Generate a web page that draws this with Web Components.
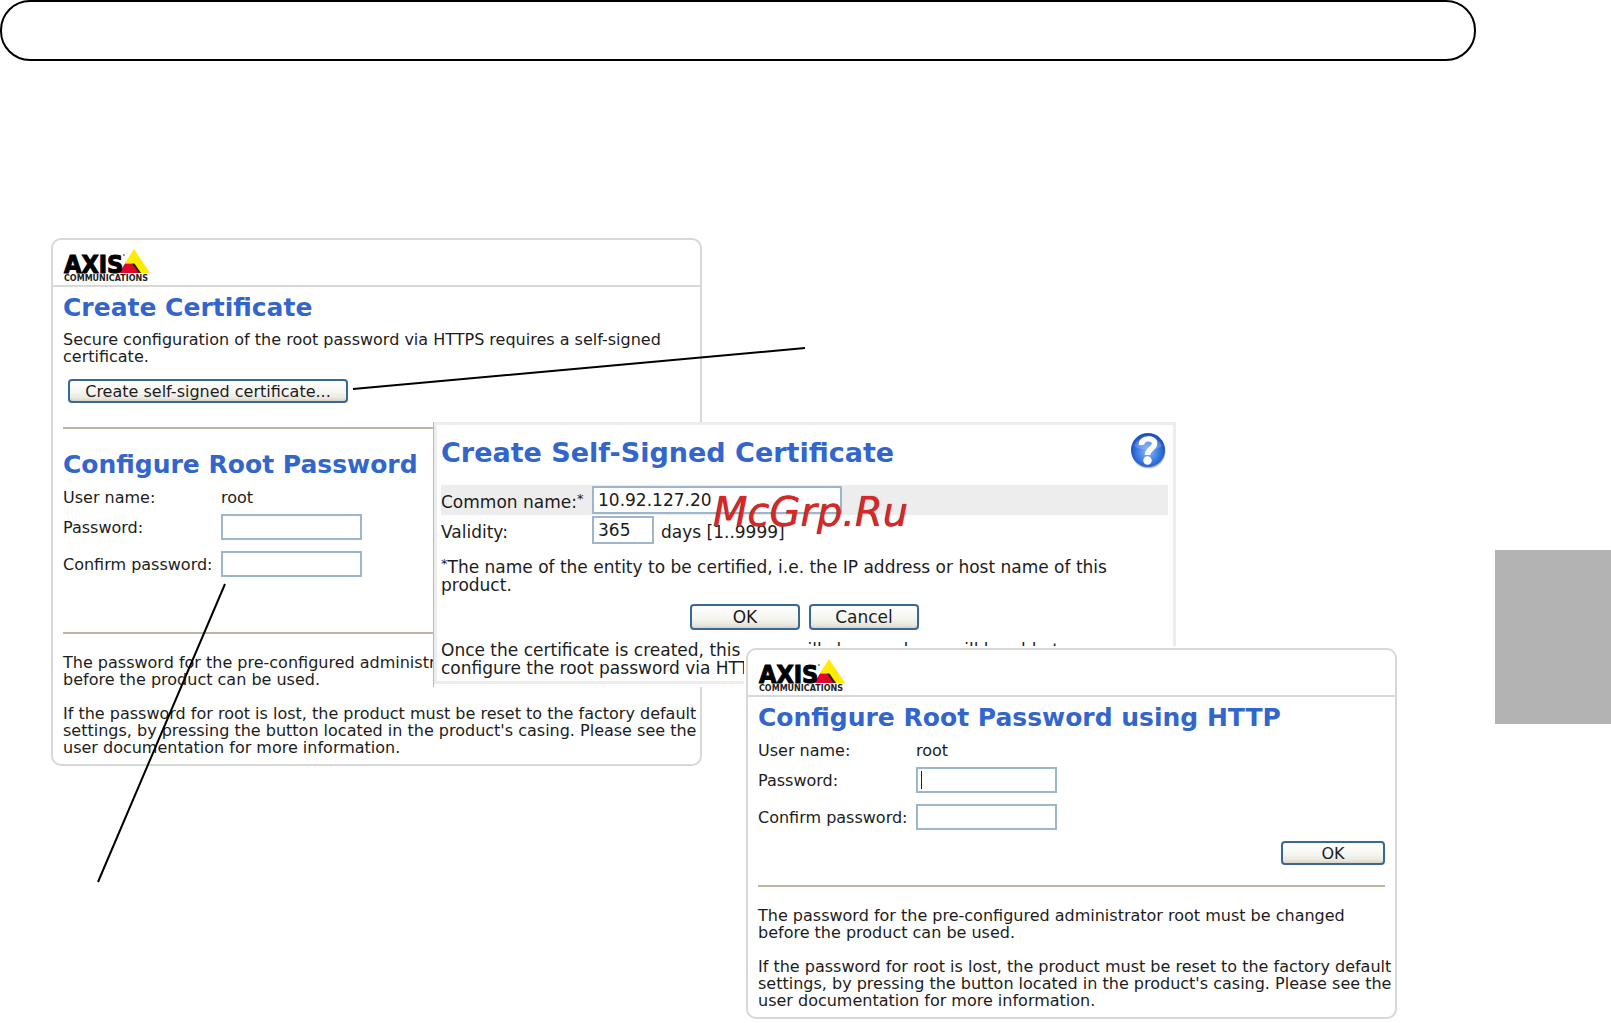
<!DOCTYPE html>
<html lang="en">
<head>
<meta charset="utf-8">
<title>Setting the root password</title>
<style>
  html, body { margin: 0; background: #fff; }
  body { font-family: "DejaVu Sans", Verdana, sans-serif; color: #1c1c1c; }
</style>
</head>
<body>
<manual-page></manual-page>

<script>
const define = (name, html, setup) => {
  const template = document.createElement('template');
  template.innerHTML = html;
  customElements.define(name, class extends HTMLElement {
    constructor() {
      super();
      this.attachShadow({ mode: 'open' }).append(template.content.cloneNode(true));
    }
    connectedCallback() { if (setup) setup(this, this.shadowRoot); }
  });
};

/* Brand mark in the panel header */
define('axis-logo', `
  <style>
    :host { display: block; width: 88px; height: 34px; }
    svg { display: block; overflow: visible; }
    text { font-family: "DejaVu Sans Condensed", "DejaVu Sans", sans-serif; font-weight: 700; fill: #000; }
    .name { font-size: 25px; stroke: #000; stroke-width: 1px; }
    .sub { font-family: "DejaVu Sans", sans-serif; font-size: 8px; fill: #222; }
  </style>
  <svg width="88" height="34" viewBox="0 0 88 34">
    <path d="M70 1 L86 25 H76 L69 15 H61 Z" fill="#ffec00"/>
    <path d="M61 15.500 H69 L75 25 H55 Z" fill="#e2062c"/>
    <path d="M68 15.500 H70.500 L77 25 H74.500 Z" fill="#222"/>
    <text class="name" x="0" y="25">AXIS</text>
    <circle cx="60" cy="7" r="1" fill="#777"/>
    <text class="sub" x="0" y="33">COMMUNICATIONS</text>
  </svg>
`);

define('help-icon', `
  <style>
    :host { display: block; }
    button { display: block; border: 0; padding: 0; background: none; }
    svg { display: block; }
  </style>
  <button type="button" aria-label="Help">
    <svg width="36" height="37" viewBox="0 0 36 37">
      <defs>
        <radialGradient id="ball" cx="50%" cy="55%" r="52%">
          <stop offset="0" stop-color="#8db9f5"/>
          <stop offset=".6" stop-color="#3f7fe4"/>
          <stop offset="1" stop-color="#1750c4"/>
        </radialGradient>
      </defs>
      <circle cx="18.500" cy="19.500" r="17" fill="#8c8c8c" opacity=".6"/>
      <circle cx="18" cy="18" r="17" fill="url(#ball)"/>
      <path d="M4 14 C6 4 28 2 32 14 C26 19 12 19 4 14 Z" fill="#fff" opacity=".18"/>
      <path d="M11.500 13 C11 5 25.500 5 24.500 12 C24 17 17.500 17 17.500 23" fill="none" stroke="#fff" stroke-width="5.500"/>
      <circle cx="17.500" cy="28.500" r="4.200" fill="#fff"/>
    </svg>
  </button>
`);

define('push-button', `
  <style>
    :host { display: block; }
    button {
      box-sizing: border-box; width: 100%; height: var(--button-height, 24px); padding: 0;
      font: inherit; line-height: 17px; color: inherit; white-space: nowrap;
      border: 2px solid #3a6896; border-radius: 4px;
      background: linear-gradient(#fff, #f4f4f0 60%, #e9e8e0 85%, #d8d3c6);
    }
  </style>
  <button type="button"><slot></slot></button>
`);

define('text-field', `
  <style>
    :host { display: flex; align-items: center; }
    label { flex: none; width: var(--label-width); padding-top: var(--label-drop, 1px); white-space: nowrap; }
    sup { font-size: 13px; line-height: 0; vertical-align: 5px; }
    .box { position: relative; flex: none; width: var(--field-width); }
    input {
      display: block; box-sizing: border-box; width: 100%; height: var(--field-height, 26px);
      border: 2px solid #9db6ce; padding: 0 4px; font: inherit; color: inherit; background: #fff; outline: 0;
    }
    .caret { position: absolute; left: 5px; top: 4px; width: 1px; height: 18px; background: #222; }
    slot { display: block; white-space: nowrap; margin-left: 7px; padding-top: 3px; }
  </style>
  <label for="field"></label>
  <div class="box"><input id="field"></div>
  <slot></slot>
`, (host, root) => {
  const label = root.querySelector('label');
  label.textContent = host.getAttribute('label');
  if (host.hasAttribute('required')) {
    const mark = document.createElement('sup');
    mark.textContent = '*';
    label.append(mark);
  }
  const input = root.querySelector('input');
  input.type = host.getAttribute('type') || 'text';
  input.value = host.getAttribute('value') || '';
  if (host.hasAttribute('caret') && !root.querySelector('.caret')) {
    const caret = document.createElement('span');
    caret.className = 'caret';
    root.querySelector('.box').append(caret);
  }
});

define('password-form', `
  <style>
    :host { display: flex; flex-direction: column; gap: 11px; --label-width: 158px; --field-width: 141px; }
    .user { display: flex; margin-bottom: -3px; }
    .user span:first-child { width: 158px; }
  </style>
  <div class="user"><span>User name:</span><span>root</span></div>
  <text-field class="first" label="Password:" type="password"></text-field>
  <text-field label="Confirm password:" type="password"></text-field>
`, (host, root) => {
  if (host.hasAttribute('caret')) {
    const first = root.querySelector('.first');
    first.setAttribute('caret', '');
    first.connectedCallback();
  }
});

define('password-notes', `
  <style>
    :host { display: block; }
    p { margin: 0; white-space: nowrap; }
    p + p { margin-top: 17px; }
  </style>
  <p>The password for the pre-configured administrator root must be changed<br>before the product can be used.</p>
  <p>If the password for root is lost, the product must be reset to the factory default<br>settings, by pressing the button located in the product's casing. Please see the<br>user documentation for more information.</p>
`);

define('page-panel', `
  <style>
    :host {
      display: block; box-sizing: border-box; border: 2px solid #d8d8d8; border-radius: 10px;
      background: #fff; font-size: 16px; line-height: 17px;
    }
    header { padding: 8px 11px 3px; border-bottom: 2px solid #d8d8d8; }
    main { padding: 6px 10px 8px; }
  </style>
  <header><axis-logo></axis-logo></header>
  <main><slot></slot></main>
`);

define('certificate-panel', `
  <style>
    h2 { margin: 0; font-size: 25px; line-height: 30px; color: #3366cc; white-space: nowrap; }
    p { margin: 8px 0 14px; white-space: nowrap; }
    push-button { width: 280px; margin-left: 5px; }
    hr { margin: 24px 0 21px; border: 0; height: 2px; background: #bcb5a0; }
    password-form { margin-top: 9px; }
    hr.low { margin: 55px 0 20px; }
  </style>
  <page-panel>
    <h2>Create Certificate</h2>
    <p>Secure configuration of the root password via HTTPS requires a self-signed<br>certificate.</p>
    <push-button>Create self-signed certificate...</push-button>
    <hr>
    <h2>Configure Root Password</h2>
    <password-form></password-form>
    <hr class="low">
    <password-notes></password-notes>
  </page-panel>
`);

define('http-panel', `
  <style>
    h2 { margin: 0; font-size: 25px; line-height: 30px; color: #3366cc; white-space: nowrap; }
    password-form { margin-top: 9px; }
    push-button { width: 104px; margin: 11px 0 0 auto; }
    hr { margin: 20px 0; border: 0; height: 2px; background: #bcb5a0; }
  </style>
  <page-panel>
    <h2>Configure Root Password using HTTP</h2>
    <password-form caret></password-form>
    <push-button>OK</push-button>
    <hr>
    <password-notes></password-notes>
  </page-panel>
`);

define('certificate-dialog', `
  <style>
    :host {
      display: block; box-sizing: border-box; padding-bottom: 3px; background: #fff;
      border-left: 1px solid #b9b9b9; font-size: 17px; line-height: 18px;
    }
    .frame { border: 3px solid #ededed; padding: 7px 5px 4px 4px; }
    .top { display: flex; justify-content: space-between; align-items: flex-start; height: 53px; padding-right: 2px; }
    h2 { margin: 5px 0 0; font-size: 27px; line-height: 32px; color: #3366cc; white-space: nowrap; }
    text-field { height: 30px; --label-width: 151px; --field-height: 28px; --label-drop: 3px; }
    .name { background: #ededed; --field-width: 250px; }
    .days { --field-width: 62px; }
    p { margin: 13px 0 10px; white-space: nowrap; }
    sup { font-size: 13px; line-height: 0; vertical-align: 5px; }
    .actions { display: flex; justify-content: center; gap: 9px; --button-height: 26px; }
    push-button { width: 110px; }
    p.next { margin: 11px 0 0; }
  </style>
  <div class="frame">
    <div class="top"><h2>Create Self-Signed Certificate</h2><help-icon></help-icon></div>
    <text-field class="name" label="Common name:" value="10.92.127.20" required></text-field>
    <text-field class="days" label="Validity:" value="365">days [1..9999]</text-field>
    <p><sup>*</sup>The name of the entity to be certified, i.e. the IP address or host name of this<br>product.</p>
    <div class="actions"><push-button>OK</push-button><push-button>Cancel</push-button></div>
    <p class="next">Once the certificate is created, this page will close and you will be able to<br>configure the root password via HTTPS.</p>
  </div>
`);

define('manual-page', `
  <style>
    :host { display: block; position: relative; min-height: 100vh; overflow: hidden; }
    .bar { box-sizing: border-box; height: 61px; margin-right: 135px; border: 2px solid #000; border-radius: 30px; }
    .tab { position: absolute; right: 0; top: 550px; width: 116px; height: 174px; background: #b3b3b3; }
    certificate-panel { position: absolute; left: 51px; top: 238px; width: 651px; }
    certificate-dialog { position: absolute; left: 433px; top: 422px; width: 743px; }
    http-panel { position: absolute; left: 744px; top: 646px; width: 651px; padding: 2px 2px 0 2px; background: #fff; }
    .leaders { position: absolute; left: 0; top: 0; pointer-events: none; }
    .mark {
      position: absolute; left: 713px; top: 490px; font: italic 40px/45px "DejaVu Sans", sans-serif;
      color: #dc2626; text-shadow: 0 0 1px #333; white-space: nowrap;
    }
  </style>
  <div class="bar"></div>
  <div class="tab"></div>
  <certificate-panel></certificate-panel>
  <certificate-dialog></certificate-dialog>
  <http-panel></http-panel>
  <svg class="leaders" width="820" height="900" viewBox="0 0 820 900" aria-hidden="true">
    <path d="M353 389 L805 348 M225 584 L98 882" stroke="#000" stroke-width="2" fill="none"/>
  </svg>
  <div class="mark">McGrp.Ru</div>
`);
</script>
</body>
</html>
